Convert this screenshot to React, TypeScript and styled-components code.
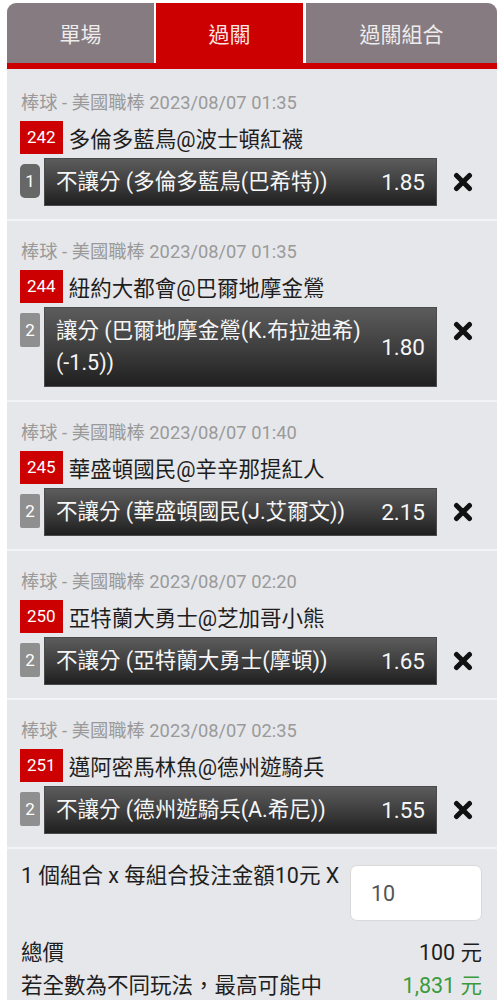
import React from 'react';
import styled, { createGlobalStyle } from 'styled-components';

const GlobalStyle = createGlobalStyle`
  html, body { margin: 0; padding: 0; background: #ffffff; }
  body {
    font-family: Roboto, "Noto Sans CJK TC", "Noto Sans", sans-serif;
    -webkit-font-smoothing: antialiased;
  }
  * { box-sizing: border-box; }
`;

const Page = styled.div`
  margin: 3px 6px 0 7px;
`;

const Tabs = styled.div`
  display: grid;
  grid-template-columns: 147px 147px 1fr;
  column-gap: 2px;
  border-bottom: 6px solid #cc0000;
`;

const Tab = styled.div<{ $active?: boolean }>`
  height: 60px;
  display: flex;
  align-items: center;
  justify-content: center;
  background: ${(p) => (p.$active ? '#cc0000' : '#857b80')};
  color: ${(p) => (p.$active ? '#fbe4e4' : '#eeeced')};
  font-size: 21px;
  &:first-child { border-top-left-radius: 9px; }
  &:last-child { border-top-right-radius: 9px; margin-left: 1px; }
`;

const Panel = styled.div`
  background: #e6e7ea;
  padding-bottom: 20px;
`;

const Item = styled.section`
  padding: 19px 0 13px 13px;
  & + & { border-top: 2px solid #f3f4f6; }
  &:first-child { padding-top: 22px; }
`;

const Meta = styled.div`
  font-size: 18.3px;
  line-height: 24px;
  color: #9a9a9a;
  padding-left: 1px;
`;

const TeamRow = styled.div`
  display: flex;
  align-items: center;
  margin-top: 6px;
  height: 33px;
`;

const GameNo = styled.span`
  background: #cc0000;
  color: #ffffff;
  font-size: 17px;
  height: 33px;
  line-height: 33px;
  padding: 0 7px;
  margin-right: 6px;
`;

const TeamName = styled.span`
  font-size: 21.5px;
  color: #1e1e1e;
`;

const BetRow = styled.div`
  display: flex;
  align-items: flex-start;
  margin-top: 4px;
`;

const SeqBadge = styled.div<{ $dark?: boolean }>`
  flex: none;
  width: 20px;
  height: 34px;
  margin-top: 6px;
  margin-right: 4px;
  background: ${(p) => (p.$dark ? '#676767' : '#8f8f8f')};
  border-radius: ${(p) => (p.$dark ? '5px' : '2px')};
  color: #ffffff;
  font-size: 17px;
  display: flex;
  align-items: center;
  justify-content: center;
`;

const BetBar = styled.div`
  flex: 1;
  display: flex;
  align-items: center;
  padding: 7px 11px;
  border: 1px solid #4a4a4a;
  background: linear-gradient(to bottom, #5c5c5c 0%, #3c3c3c 55%, #1f1f1f 100%);
  color: #f6f6f6;
`;

const BetLabel = styled.div`
  flex: 1;
  font-size: 21.5px;
  line-height: 32px;
`;

const Odds = styled.div`
  flex: none;
  min-width: 50px;
  text-align: right;
  font-size: 22.5px;
  line-height: 32px;
`;

const RemoveBtn = styled.button`
  flex: none;
  width: 20px;
  height: 20px;
  margin: 14px 24px 0 16px;
  padding: 0;
  border: none;
  background: transparent;
  display: flex;
  cursor: pointer;
`;

const Summary = styled.div`
  border-top: 2px solid #f3f4f6;
  padding: 16px 15px 0 14px;
`;

const StakeRow = styled.div`
  display: flex;
  align-items: flex-start;
  justify-content: space-between;
`;

const StakeText = styled.div`
  font-size: 21.5px;
  line-height: 22px;
  color: #1e1e1e;
`;

const StakeInput = styled.input`
  width: 132px;
  height: 56px;
  border: 1px solid #d9d9d9;
  border-radius: 7px;
  background: #ffffff;
  padding: 0 0 0 20px;
  font-family: inherit;
  font-size: 21.5px;
  color: #555555;
  outline: none;
`;

const TotalRow = styled.div<{ $first?: boolean }>`
  display: flex;
  justify-content: space-between;
  font-size: 21.5px;
  line-height: 33px;
  color: #1e1e1e;
  margin-top: ${(p) => (p.$first ? '15px' : '0')};
`;

const Amount = styled.span<{ $green?: boolean }>`
  color: ${(p) => (p.$green ? '#3b9a3b' : '#1e1e1e')};
`;

const CrossIcon = () => (
  <svg width="20" height="20" viewBox="0 0 20 20">
    <path d="M3.5 3.5 L16.5 16.5 M16.5 3.5 L3.5 16.5" stroke="#111" strokeWidth="5" strokeLinecap="round" />
  </svg>
);

type Bet = {
  meta: string;
  no: string;
  teams: string;
  seq: string;
  dark?: boolean;
  label: string;
  odds: string;
};

const bets: Bet[] = [
  { meta: '棒球 - 美國職棒 2023/08/07 01:35', no: '242', teams: '多倫多藍鳥@波士頓紅襪', seq: '1', dark: true, label: '不讓分 (多倫多藍鳥(巴希特))', odds: '1.85' },
  { meta: '棒球 - 美國職棒 2023/08/07 01:35', no: '244', teams: '紐約大都會@巴爾地摩金鶯', seq: '2', label: '讓分 (巴爾地摩金鶯(K.布拉迪希) (-1.5))', odds: '1.80' },
  { meta: '棒球 - 美國職棒 2023/08/07 01:40', no: '245', teams: '華盛頓國民@辛辛那提紅人', seq: '2', label: '不讓分 (華盛頓國民(J.艾爾文))', odds: '2.15' },
  { meta: '棒球 - 美國職棒 2023/08/07 02:20', no: '250', teams: '亞特蘭大勇士@芝加哥小熊', seq: '2', label: '不讓分 (亞特蘭大勇士(摩頓))', odds: '1.65' },
  { meta: '棒球 - 美國職棒 2023/08/07 02:35', no: '251', teams: '邁阿密馬林魚@德州遊騎兵', seq: '2', label: '不讓分 (德州遊騎兵(A.希尼))', odds: '1.55' },
];

export default function App() {
  return (
    <>
      <GlobalStyle />
      <Page>
        <Tabs>
          <Tab>單場</Tab>
          <Tab $active>過關</Tab>
          <Tab>過關組合</Tab>
        </Tabs>
        <Panel>
          {bets.map((b, i) => (
            <Item key={i}>
              <Meta>{b.meta}</Meta>
              <TeamRow>
                <GameNo>{b.no}</GameNo>
                <TeamName>{b.teams}</TeamName>
              </TeamRow>
              <BetRow>
                <SeqBadge $dark={b.dark}>{b.seq}</SeqBadge>
                <BetBar>
                  <BetLabel>{b.label}</BetLabel>
                  <Odds>{b.odds}</Odds>
                </BetBar>
                <RemoveBtn aria-label="remove">
                  <CrossIcon />
                </RemoveBtn>
              </BetRow>
            </Item>
          ))}
          <Summary>
            <StakeRow>
              <StakeText>1 個組合 x 每組合投注金額10元 X</StakeText>
              <StakeInput defaultValue="10" />
            </StakeRow>
            <TotalRow $first>
              <span>總價</span>
              <Amount>100 元</Amount>
            </TotalRow>
            <TotalRow>
              <span>若全數為不同玩法，最高可能中</span>
              <Amount $green>1,831 元</Amount>
            </TotalRow>
          </Summary>
        </Panel>
      </Page>
    </>
  );
}
